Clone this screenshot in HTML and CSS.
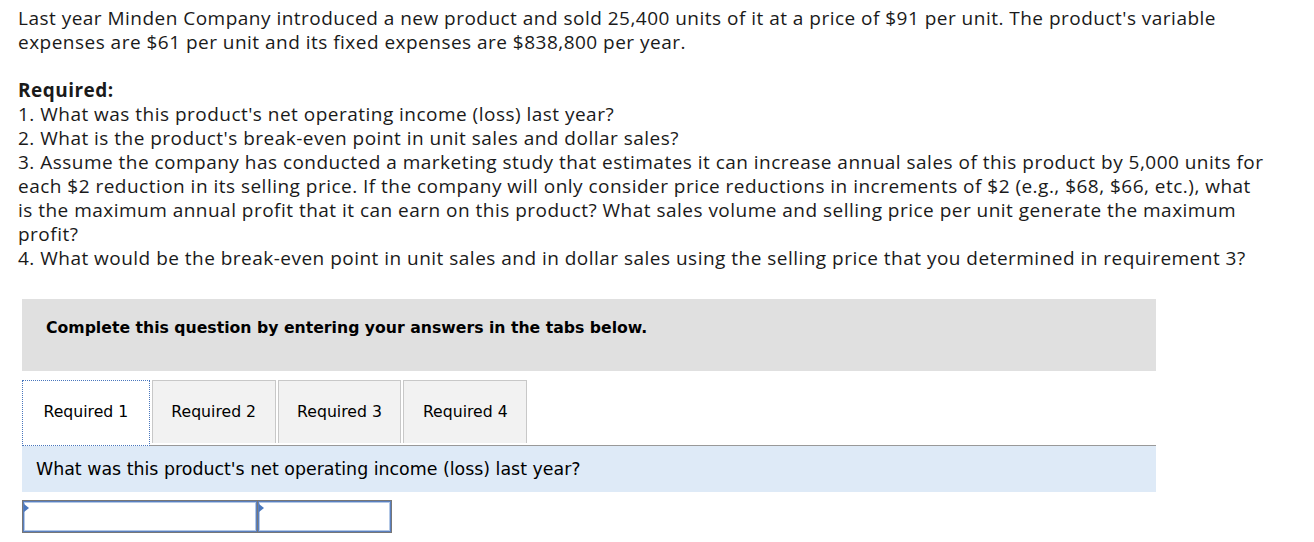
FILE: index.html
```html
<!DOCTYPE html>
<html lang="en">
<head>
  <meta charset="UTF-8">
  <title>Minden Company</title>
  <link rel="stylesheet" href="styles.css">
</head>
<body>

<div class="problem">
  <p>Last year Minden Company introduced a new product and sold 25,400 units of it at a price of $91 per unit. The product's variable expenses are $61 per unit and its fixed expenses are $838,800 per year.</p>

  <p><strong>Required:</strong><br>
  1. What was this product's net operating income (loss) last year?<br>
  2. What is the product's break-even point in unit sales and dollar sales?<br>
  3. Assume the company has conducted a marketing study that estimates it can increase annual sales of this product by 5,000 units for each $2 reduction in its selling price. If the company will only consider price reductions in increments of $2 (e.g., $68, $66, etc.), what is the maximum annual profit that it can earn on this product? What sales volume and selling price per unit generate the maximum profit?<br>
  4. What would be the break-even point in unit sales and in dollar sales using the selling price that you determined in requirement 3?</p>
</div>

<div class="question">
  <div class="instructions">Complete this question by entering your answers in the tabs below.</div>

  <div class="tabs">
    <div class="tab active">Required 1</div>
    <div class="tab">Required 2</div>
    <div class="tab">Required 3</div>
    <div class="tab">Required 4</div>
  </div>

  <div class="prompt">What was this product's net operating income (loss) last year?</div>

  <div class="answer-row">
    <div class="cell wide"><input type="text"></div>
    <div class="cell"><input type="text"></div>
  </div>
</div>

</body>
</html>
```

FILE: styles.css
```css
body {
  margin: 0;
  padding: 6px 18px 0 18px;
  background-color: #ffffff;
  color: #1a1a1a;
}
.problem {
  font-family: 'Open Sans', Arial, sans-serif;
  font-size: 19px;
  letter-spacing: 0.48px;
  line-height: 24px;
  max-width: 1252px;
}
.problem p {
  margin: 0 0 24px 0;
}
.problem strong {
  font-weight: bold;
}
.question {
  margin: 29px 0 0 4px;
  width: 1134px;
  font-family: 'DejaVu Sans', Verdana, sans-serif;
  color: #000000;
}
.instructions {
  background-color: #e0e0e0;
  font-weight: bold;
  font-size: 15.7px;
  line-height: 20px;
  padding: 19px 24px 33px 24px;
}
.tabs {
  display: flex;
  gap: 2px;
  margin-top: 9px;
  border-bottom: 1px solid #999999;
}
.tab {
  height: 62px;
  line-height: 62px;
  padding: 0 18.5px;
  font-size: 15.7px;
  background-color: #f2f2f2;
  border: 1px solid #c8c8c8;
  border-bottom: none;
}
.tab.active {
  background-color: #ffffff;
  border: 1px dotted #4a77bd;
  margin-bottom: -1px;
  height: 64px;
  padding: 0 20.5px;
}
.prompt {
  background-color: #deeaf7;
  font-size: 17.4px;
  line-height: 46px;
  padding: 0 14px;
  height: 46px;
}
.answer-row {
  display: flex;
  margin-top: 8px;
  width: 368px;
  border: 1px solid #777777;
}
.cell {
  position: relative;
  width: 133px;
}
.cell.wide {
  width: 234px;
  border-right: 1px solid #777777;
}
.cell input {
  display: block;
  width: 100%;
  height: 31px;
  box-sizing: border-box;
  border: 1px solid #5a7fbf;
  box-shadow: inset 0 0 0 1px #b3c8e6;
  margin: 0;
  padding: 0 6px;
  outline: none;
}
.cell::before {
  content: "";
  position: absolute;
  left: 1px;
  top: 3px;
  border-top: 4px solid transparent;
  border-bottom: 4px solid transparent;
  border-left: 5px solid #4a77bd;
}
```
